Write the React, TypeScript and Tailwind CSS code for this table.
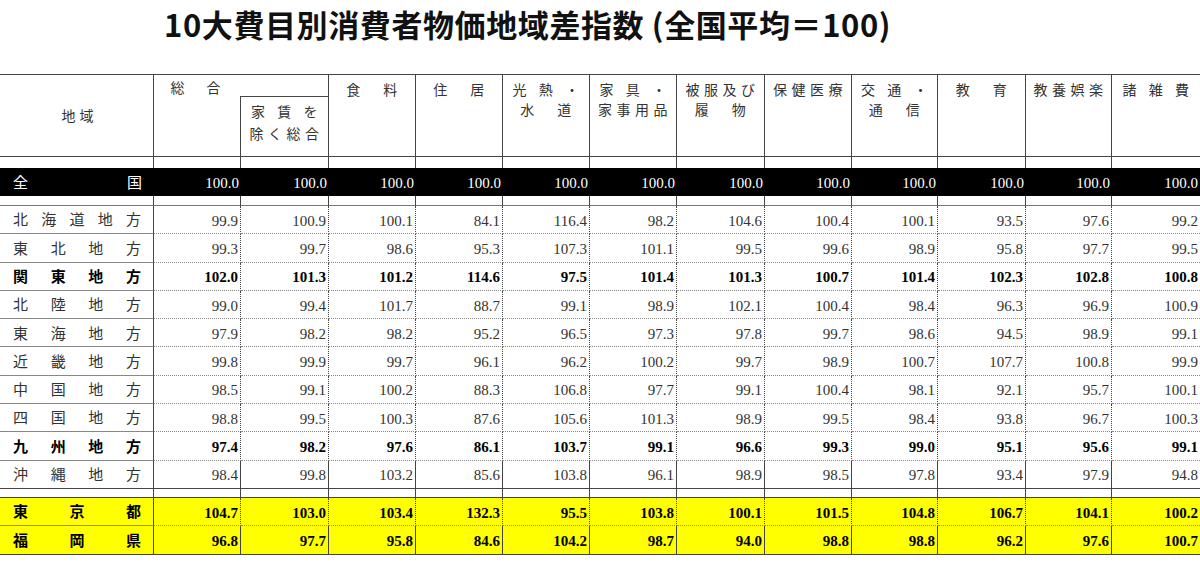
const widths = [87, 88, 87, 87, 87, 87, 88, 87, 86, 88, 86, 88]

const heads: string[][] = [
  ['食　料'],
  ['住　居'],
  ['光 熱 ・', '水　道'],
  ['家 具 ・', '家事用品'],
  ['被服及び', '履　物'],
  ['保健医療'],
  ['交 通 ・', '通　信'],
  ['教　育'],
  ['教養娯楽'],
  ['諸 雑 費'],
]

type Row = { name: string; vals: string[]; bold?: boolean }

const regions: Row[] = [
  { name: '北海道地方', vals: ['99.9', '100.9', '100.1', '84.1', '116.4', '98.2', '104.6', '100.4', '100.1', '93.5', '97.6', '99.2'] },
  { name: '東北地方', vals: ['99.3', '99.7', '98.6', '95.3', '107.3', '101.1', '99.5', '99.6', '98.9', '95.8', '97.7', '99.5'] },
  { name: '関東地方', bold: true, vals: ['102.0', '101.3', '101.2', '114.6', '97.5', '101.4', '101.3', '100.7', '101.4', '102.3', '102.8', '100.8'] },
  { name: '北陸地方', vals: ['99.0', '99.4', '101.7', '88.7', '99.1', '98.9', '102.1', '100.4', '98.4', '96.3', '96.9', '100.9'] },
  { name: '東海地方', vals: ['97.9', '98.2', '98.2', '95.2', '96.5', '97.3', '97.8', '99.7', '98.6', '94.5', '98.9', '99.1'] },
  { name: '近畿地方', vals: ['99.8', '99.9', '99.7', '96.1', '96.2', '100.2', '99.7', '98.9', '100.7', '107.7', '100.8', '99.9'] },
  { name: '中国地方', vals: ['98.5', '99.1', '100.2', '88.3', '106.8', '97.7', '99.1', '100.4', '98.1', '92.1', '95.7', '100.1'] },
  { name: '四国地方', vals: ['98.8', '99.5', '100.3', '87.6', '105.6', '101.3', '98.9', '99.5', '98.4', '93.8', '96.7', '100.3'] },
  { name: '九州地方', bold: true, vals: ['97.4', '98.2', '97.6', '86.1', '103.7', '99.1', '96.6', '99.3', '99.0', '95.1', '95.6', '99.1'] },
  { name: '沖縄地方', vals: ['98.4', '99.8', '103.2', '85.6', '103.8', '96.1', '98.9', '98.5', '97.8', '93.4', '97.9', '94.8'] },
]

const cities: Row[] = [
  { name: '東京都', bold: true, vals: ['104.7', '103.0', '103.4', '132.3', '95.5', '103.8', '100.1', '101.5', '104.8', '106.7', '104.1', '100.2'] },
  { name: '福岡県', bold: true, vals: ['96.8', '97.7', '95.8', '84.6', '104.2', '98.7', '94.0', '98.8', '98.8', '96.2', '97.6', '100.7'] },
]

const gothic = { fontFamily: '"Noto Sans CJK JP", "Noto Sans", sans-serif' }
const serif = { fontFamily: '"Liberation Serif", "Noto Sans CJK JP", serif' }

function Name({ text, bold, white }: { text: string; bold?: boolean; white?: boolean }) {
  const color = white ? 'text-white' : bold ? 'font-bold text-black' : 'text-[#333]'
  return (
    <div className={`flex justify-between pl-[13px] pr-[12px] text-[15px] ${color}`} style={gothic}>
      {text.split('').map((c, i) => (
        <span key={i}>{c}</span>
      ))}
    </div>
  )
}

function Spacer({ h, bottom }: { h: string; bottom?: string }) {
  return (
    <tr className={h}>
      {Array.from({ length: 13 }).map((_, i) => (
        <td key={i} className={`${i < 12 ? 'border-r' : ''} border-[#444] ${bottom ?? ''}`} />
      ))}
    </tr>
  )
}

function DataRow({ row, last, yellow }: { row: Row; last?: boolean; yellow?: boolean }) {
  const bottom = last ? 'border-b border-b-[#444]' : 'border-b border-dotted border-b-[#888]'
  return (
    <tr className={`${yellow ? 'h-[28.5px] bg-[#ffff00]' : 'h-[28.3px]'}`}>
      <td className={`border-r border-r-[#444] border-solid ${bottom} p-0`}>
        <Name text={row.name} bold={row.bold} />
      </td>
      {row.vals.map((v, i) => (
        <td
          key={i}
          className={`${i < 11 ? 'border-r border-r-[#444]' : ''} ${bottom} p-0 pr-[2px] pt-[3px] text-right text-[15px] leading-none ${row.bold ? 'font-bold text-black' : 'text-[#333]'}`}
          style={serif}
        >
          {v}
        </td>
      ))}
    </tr>
  )
}

export default function App() {
  return (
    <div className="w-[1200px] h-[575px] overflow-hidden bg-white">
      <div className="h-[74px] pl-[164px] pt-[3px]">
        <h1 className="text-[31px] font-bold text-[#111] leading-[42px] tracking-[0.6px]" style={gothic}>
          10大費目別消費者物価地域差指数 (全国平均＝100)
        </h1>
      </div>

      <table className="table-fixed w-[1200px] border-separate border-spacing-0">
        <colgroup>
          <col style={{ width: 154 }} />
          {widths.map((w, i) => (
            <col key={i} style={{ width: w }} />
          ))}
        </colgroup>
        <thead className="text-[14px] font-normal text-[#333]" style={gothic}>
          <tr className="h-[21px]">
            <th rowSpan={2} className="border-t border-r border-b border-[#444] p-0 pl-[6px] font-normal tracking-[4px]">
              地域
            </th>
            <th colSpan={2} className="border-t border-r border-[#444] p-0 align-top font-normal">
              <div className="w-[87px] text-center pt-[3px] leading-[18px] tracking-[4px]">総　合</div>
            </th>
            {heads.map((h, i) => (
              <th
                key={i}
                rowSpan={2}
                className={`border-t ${i < 9 ? 'border-r' : ''} border-b border-[#444] p-0 pt-[4px] align-top font-normal leading-[20px] tracking-[4.5px]`}
              >
                {h.map((l, j) => (
                  <div key={j} className="whitespace-nowrap pl-[4px]">{l}</div>
                ))}
              </th>
            ))}
          </tr>
          <tr className="h-[61px]">
            <td className="border-r border-b border-[#444] p-0" />
            <th className="border-t border-r border-b border-[#444] p-0 pt-[3px] pl-[4px] align-top font-normal leading-[22px] tracking-[4.5px]">
              <div>家 賃 を</div>
              <div>除く総合</div>
            </th>
          </tr>
        </thead>
        <tbody>
          <Spacer h="h-[11px]" />
          <tr className="h-[28px] bg-black">
            <td className="p-0">
              <Name text="全国" white />
            </td>
            {Array.from({ length: 12 }).map((_, i) => (
              <td key={i} className="p-0 pr-[2px] pt-[3px] text-right text-[15px] leading-none text-white" style={serif}>
                100.0
              </td>
            ))}
          </tr>
          <Spacer h="h-[10px]" bottom="border-b border-b-[#777]" />
          {regions.map((r, i) => (
            <DataRow key={r.name} row={r} last={i === regions.length - 1} />
          ))}
          <Spacer h="h-[9px]" bottom="border-b" />
          {cities.map((r, i) => (
            <DataRow key={r.name} row={r} yellow last={i === cities.length - 1} />
          ))}
        </tbody>
      </table>
    </div>
  )
}
